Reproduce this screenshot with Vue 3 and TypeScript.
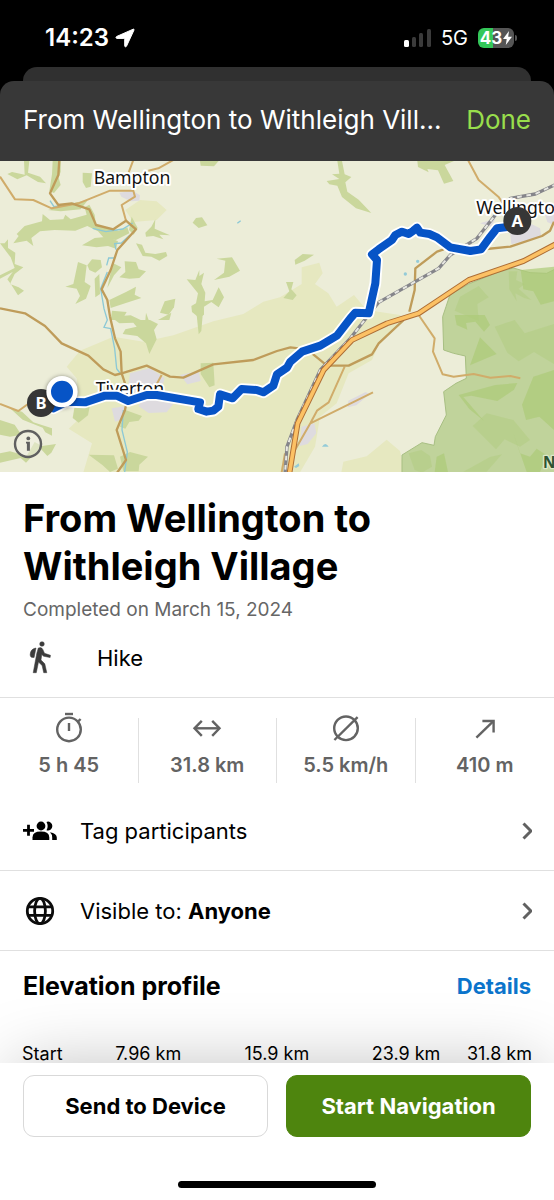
<script setup lang="ts">
interface Stat {
  id: string
  label: string
  value: string
  paths: string[]
  circle?: { cx: number; cy: number; r: number }
}

const title = 'From Wellington to Withleigh Village'
const shortTitle = 'From Wellington to Withleigh Vill...'

const stats: Stat[] = [
  {
    id: 'duration',
    label: 'Duration',
    value: '5 h 45',
    circle: { cx: 16, cy: 17.4, r: 11.8 },
    paths: ['M12 2h8', 'M16 11v8', 'M25 9.6l2.6-2.6'],
  },
  {
    id: 'distance',
    label: 'Distance',
    value: '31.8 km',
    paths: ['M10.8 8.8L3.5 16.3l7.3 7.5', 'M21.2 8.8l7.3 7.5-7.3 7.5', 'M4 16.3h24'],
  },
  {
    id: 'speed',
    label: 'Average speed',
    value: '5.5 km/h',
    circle: { cx: 16, cy: 16.3, r: 11.8 },
    paths: ['M4.4 28L27.6 5.2'],
  },
  {
    id: 'ascent',
    label: 'Ascent',
    value: '410 m',
    paths: ['M7.4 25.6L24.4 9.2', 'M13.4 9H24.6V20.4'],
  },
]

const ticks: string[] = ['Start', '7.96 km', '15.9 km', '23.9 km', '31.8 km']

const woods: string[] = [
  'M72 3h16l-4 35 36 12 18 20-24-4-34-20-28 12-30-16 14-6 38 8z',
  'M158 3h24v32l-6 18 6 22-20 24-14-6 8-50z',
  'M248 38l28 2-4 40-14 4-10-18z',
  'M600 3h56l-14 16-40-2z',
  'M144 150l90-24 28-4-20 26-60 6z',
  'M50 222l24-24 52-14 2-22 22 18 40-2 6-14 16 14 48-14-6-22 14-8 16 30 4 30 34 8 34 10 26-10 6 18-40 20-34-4-20-22-32-16-36 14-62-2-44 4-26 20 6 24-20-16-40 8 16-22z',
  'M395 170l18 34-12 20-14-14z',
  'M246 256l38-22 40-4 30 14-6 22-24-8-34 4z',
  'M408 250l18 4 10 24 30 4 32-6 4 12-24 14-24-12-26-2z',
  'M436 218l18-18 12-22-2 28 46 20-32-2 12 14-30-10-22 2z',
  'M578 188l10-14 18-2 16 24-26 8z',
  'M0 250l14 0 10-12 0 26 22 14-2 34 26 10-26 20-14 30 26 10 16 10-18 14-20-32-12-16 16-22-38 20v-10l44-22-12-32z',
  'M234 306l26 10-6 50 18 12-14 38-32 16 14-24-10-22-34-6 24-8z',
  'M262 316l14-18 26 2 4 22-20 16-18-8z',
  'M340 310l24 12-22 24-20 38 8-38z',
  'M374 304l34 2 8 22 22 6-20 20-30 2-30-4 18-16z',
  'M284 356l14-14 2 60-14 10z',
  'M328 420l50-24 30-16-4 24 20 10-44 14-48 16z',
  'M336 452l44 4-14 24h-34z',
  'M480 458l14-34 32-8-4 26-16 22z',
  'M438 458l8 22h-10zM474 480l40-22-6 22z',
  'M560 358l26 2 12-30 0 18 14-10-8 34 12 26-2 26 24-4 18-38 16 30-16 30-22-16-22 14 0 24-14 10-22-18-2-18 14-8 6-30z',
  'M650 296l46-4 24 40-32 18-46 10 30-22 4-36z',
  'M1012 3h14l8 40 20 8-18 16 6 28 34 24 38 40-46-14-42-34-14-34-24-4-8-10 38-6-22-14 22-2z',
  'M1252 3h110l-28 12 26 48-28 8-18-40-32-4 4 10-32-16z',
  'M1350 3h-80l20 20z',
  'M884 300l24-18 34 2-28 18-28 12z',
  'M858 366l22 0-6 22 16 18-12 14-28-6 18-20z',
  'M332 470l60-4 30 14 28 0 24 12-12 18 8 28-22 44-10-32-26-22-44-6 8-14 34-8-10-12-42 2z',
  'M590 465h18l-4 48-8 10z',
  'M602 610l38-2 4 68-16 6-26-40z',
  'M376 750l50 18-10 14-28 4-12 20-16-6z',
  'M224 738l46-4-6 32-28 22-18-14z',
  'M30 745l36 10 34 32 56 18 0 22-20-10-8-14-60-24z',
  'M0 780l44 14 20 30-34 6-30-6zM0 880l30-6 50 14 24-42 22 12 42-6-14 26-12 10-22-24-42 44-16-14-62 14z',
  'M360 890l30-14 54 14-26 24-2 20h-46z',
  'M266 884l76 2 12 40-24 10-22-20z',
]

const moor: string[] = [
  'M1364 465h90l16 30-18 20-26-30-28 4 4 20-32-14z',
  'M1526 334l26 0-4 26 26 12-18 14 38 34-22-6-26-14 4 24-22-36z',
  'M1376 705l110-30 66-6-10 20-50 34-78-16-24 4 62 72-44-36z',
  'M1380 410l56-32 30 34-34 20 4 50-72-30z',
  'M1562 330l100-10v104l-40 10-22-40-30-6z',
  'M1484 500l60-20 30 40 88-28v120l-60-36-46 28-34-26z',
  'M1440 532l50 50-34 14-46 20z',
  'M1460 760l80 20 50 60-30 20-46-22-26 30-70-70z',
  'M1600 650l62-20v180l-44-40-40 10-12-46z',
  'M1226 880l38-10 26 18 6 32-30 18-22-8z',
  'M1310 890l22-10 12 56h-40z',
  'M1390 935l80-44 36-8-46 52z',
  'M1540 820l20 60 30 10 20-24 30 20-20 50h-40z',
]

const minorRoads: string[] = [
  'M0 50L45 118 100 120 155 145 235 130 330 92H400L405 110 365 135 378 182',
  'M400 0L385 40M520 0L475 25 445 32',
  'M0 732L55 753 84 732',
  'M485 645L455 700',
  'M1404 0L1436 60 1495 110 1530 160',
  'M1256 465L1304 535 1299 575 1328 643 1361 650 1421 642 1471 653 1531 648 1561 655',
  'M1034 620L986 727 951 752 931 790 885 870M1119 697L931 790',
  'M855 880L845 937',
]

const mainRoads: string[] = [
  'M178 0L175 45 150 100 175 135 215 130 268 148 288 195 340 208 378 182 408 208 352 270 332 330 305 388 322 420 330 470 345 535 362 575 365 640 385 700 375 750 350 810 378 900 350 940',
  'M0 445L75 460 135 498 185 550 265 587 310 628 345 645 365 640 440 617 510 650 550 653 640 613 760 600 831 573 871 562 896 565',
  'M1460 267L1531 260 1626 228 1650 212 1662 185',
  'M1331 268L1311 275 1246 325 1244 390 1228 455',
  'M1211 480L1136 550 1116 583 1046 617H981L936 580',
]

const motorway = 'M1670 251L1571 303 1406 360 1256 460 1161 490 1056 540 971 630 893 790 868 942'
const railway = 'M1670 72L1606 102 1531 115 1486 165 1431 235 1351 285 1316 325 1136 427 1051 535 961 630 891 780 861 860 855 942'
const route =
  'M1531 200L1491 205 1471 230 1443 268 1411 273 1351 262 1311 232 1288 222 1261 218 1251 203 1240 212 1226 222 1206 215 1186 225 1176 240 1136 268 1116 283 1131 300 1126 370 1106 460 1066 458 1052 474 1011 527 961 557 906 575 871 605 861 623 831 643 820 677 790 697 770 690 725 687 698 715 660 703 655 740 640 752 620 755 595 747 600 727 470 705 440 705 385 723 350 707 315 707 255 727 200 725 160 745'
</script>

<template>
  <div class="screen">
    <div class="status">
      <div class="clock">
        <span>14:23</span>
        <svg class="locate" viewBox="0 0 20 20" aria-hidden="true">
          <path d="M18.200 1.200c.6-.3 1 .2.8.8l-7.500 16.200c-.5 1-1.800.7-1.800-.3V11.200c0-.6-.2-.8-.8-.8H2C.9 10.400.6 9 1.600 8.500z" fill="#fff" stroke="#fff" stroke-width="1" stroke-linejoin="round" />
        </svg>
      </div>
      <div class="signals">
        <svg class="bars" viewBox="0 0 28 18" aria-hidden="true">
          <rect x="0" y="11" width="5" height="7" rx="1.500" fill="#fff" />
          <rect x="8" y="8" width="4" height="10" rx="1.500" fill="#3b3b3b" />
          <rect x="15" y="4" width="4" height="14" rx="1.500" fill="#3b3b3b" />
          <rect x="23" y="0" width="4" height="18" rx="1.500" fill="#3b3b3b" />
        </svg>
        <span class="network">5G</span>
        <span class="battery">
          <span class="cell">
            <span>43</span>
            <svg class="bolt" viewBox="0 0 9 14" aria-hidden="true"><path d="M6 0L0 8h3.700L2.800 14 9 5.700H5.200z" fill="#fff" /></svg>
          </span>
          <span class="nub"></span>
        </span>
      </div>
    </div>

    <div class="behind"></div>

    <header class="bar">
      <span class="bar-title">{{ shortTitle }}</span>
      <button type="button" class="done">Done</button>
    </header>

    <main class="sheet">
      <section class="map" aria-label="Route map">
        <svg class="map-art" viewBox="0 3 1662 933" preserveAspectRatio="xMidYMid slice" role="img" aria-label="Map from Wellington to Withleigh">
          <rect x="-1000" y="-1000" width="4000" height="3000" fill="#ecedd8" />
          <path fill="#e6e8c0" d="M640 484L730 462 790 425 840 412 905 372 905 322 958 308 968 340 945 372 985 400 1010 440 1062 405 1100 450 1200 465 1211 485 1136 555 1116 600 1046 640 1010 730 960 770 945 860 900 937H250L276 850 206 806 244 770 230 655 200 620 240 572 340 530 430 545 520 526z" />
          <path fill="#e6e8c0" d="M376 150l44-30 50 4 30 26-30 30-70 6zM1030 905l70-16 60-50 40 34 14 64h-190z" />
          <path fill="#dedbdf" d="M358 98l40-6 22 14-2 16-26 2-28-14zM390 640l60-16 44 30-10 40-50 20-50-30zM540 645l56-12 6 30-40 10zM430 715l90 16-20 26-54 2-30-20zM335 745l40-6-10 40-20 6zM1530 215l50-30 40 20 4 26-90 22zM1630 150l32-14v60l-20-10zM1440 190l46-14-12 24zM1045 722l52-26 12 6-40 34-26 6zM905 800l38-10 6 30-26 32-24 6z" />
          <path v-for="(d, i) in woods" :key="`w${i}`" :d="d" fill="#cad79c" />
          <path fill="#c0d39b" stroke="#a8bf83" stroke-width="3" d="M1700 310L1640 340 1590 338 1540 324 1490 338 1406 372 1350 404 1338 440 1328 470 1331 570 1361 580 1396 588 1399 655 1368 670 1331 695 1339 765 1306 830 1302 856 1266 848 1206 885V945H1700z" />
          <path v-for="(d, i) in moor" :key="`m${i}`" :d="d" fill="#adca77" :fill-opacity="i % 2 ? 0.4 : 0.7" />
          <path fill="none" stroke="#8cc9d6" stroke-width="4" d="M150 122l12 18 60-10M278 205l40 10 50-8 30-18M390 225l-26 24-20 2 4 18M344 294l-18 0-6 22M322 336l-20 50 10 60 10 34-10 22 20 4 12 60 6 60 12 16M370 750l-4 60 16 66-8 60M712 190l10-8" />
          <path fill="#94cbd8" d="M1211 342a5 5 0 1 0 10 0 5 5 0 1 0-10 0M1248 304a5 5 0 1 0 10 0 5 5 0 1 0-10 0M966 860q10-16 20 0zM882 920l14-10 2 8-10 6z" />
          <g fill="none" stroke-linejoin="round">
            <path v-for="(d, i) in minorRoads" :key="`n${i}`" :d="d" stroke="#d0ac6a" stroke-width="6" />
            <path v-for="(d, i) in mainRoads" :key="`r${i}`" :d="d" stroke="#bf9c5a" stroke-width="7" />
            <path :d="railway" stroke="#85858a" stroke-width="10" />
            <path :d="railway" stroke="#e8e8e2" stroke-width="6" stroke-dasharray="14 14" />
            <path :d="motorway" stroke="#ad6d35" stroke-width="17" />
            <path :d="motorway" stroke="#fcc164" stroke-width="11" />
          </g>
          <g class="place">
            <text x="281" y="72">Bampton</text>
            <text x="1429" y="161">Wellington</text>
            <text x="287" y="704">Tiverton</text>
            <text class="park" x="1629" y="924">N</text>
          </g>
          <g fill="none" stroke-linejoin="round" stroke-linecap="round">
            <path :d="route" stroke="#fff" stroke-width="35" />
            <path :d="route" stroke="#0754c6" stroke-width="24" />
          </g>
          <g class="pin">
            <circle cx="123" cy="729" r="42" />
            <text x="123" y="747">B</text>
            <circle cx="1552" cy="183" r="42" />
            <text x="1552" y="201">A</text>
          </g>
          <circle class="here" cx="186" cy="695" r="40" fill="#0754c6" stroke="#fff" stroke-width="14" />
        </svg>
        <button type="button" class="info" aria-label="Map information">
          <svg viewBox="0 0 30 30" aria-hidden="true">
            <circle cx="15" cy="15" r="13" fill="#f2f2e6" fill-opacity=".5" stroke="#606060" stroke-width="2.400" />
            <circle cx="15.300" cy="9.400" r="1.900" fill="#606060" />
            <path d="M13 12.800h3.900v9h-3v-7.200H13z" fill="#606060" />
          </svg>
        </button>
      </section>

      <section class="intro">
        <h1>{{ title }}</h1>
        <p class="date">Completed on March 15, 2024</p>
        <div class="sport">
          <svg class="hiker" viewBox="3 0 40 40" aria-hidden="true">
            <g fill="#3c3c3c" stroke="#3c3c3c" stroke-width=".5" stroke-linejoin="round">
              <circle cx="22" cy="6" r="2.300" />
              <path d="M16 10c-3.500.3-5.800 3-5.800 6.500 0 2 .8 3 2.300 3h1.600z" />
              <path d="M18.300 10q3.600-1.200 4.500 1.400l1.700 3.900 6 2-.4 2.300-6.500-1.400-1.800-1.600-.8 5.400 3.800 3.800 2 8.900h-3.100l-1.600-7.200-3.600-3.400-2.200 10.600h-3.100l3.600-19.500z" />
            </g>
          </svg>
          <span>Hike</span>
        </div>
      </section>

      <dl class="stats">
        <div v-for="s in stats" :key="s.id" class="stat">
          <dt :aria-label="s.label">
            <svg viewBox="0 0 32 32" fill="none" stroke="#636363" stroke-width="2.400" aria-hidden="true">
              <circle v-if="s.circle" :cx="s.circle.cx" :cy="s.circle.cy" :r="s.circle.r" />
              <path v-for="(p, i) in s.paths" :key="i" :d="p" />
            </svg>
          </dt>
          <dd>{{ s.value }}</dd>
        </div>
      </dl>

      <button type="button" class="row">
        <svg class="row-icon" viewBox="1 1 34 34" aria-hidden="true">
          <path d="M1 17.300h11M6.500 11.800v11" stroke="#000" stroke-width="2.800" />
          <circle cx="19" cy="13" r="4.400" />
          <path d="M10.500 27v-2.600q0-5.800 8.400-5.800t8.400 5.800V27z" />
          <path d="M24.500 8.900a4.400 4.400 0 1 1 0 8.300q2.400-4.100 0-8.300z" />
          <path d="M28 19.200q6.800 1.300 6.800 5.200V27h-4.600v-2.600q0-3.100-2.200-5.200z" />
        </svg>
        <span class="row-text">Tag participants</span>
        <svg class="chevron" viewBox="0 0 10 18" aria-hidden="true"><path d="M1.500 1.500L9 9l-7.500 7.500" /></svg>
      </button>
      <button type="button" class="row">
        <svg class="row-icon" viewBox="1 1 34 34" aria-hidden="true">
          <g fill="none" stroke="#0c0c0c" stroke-width="2.800">
            <circle cx="18" cy="18" r="12.700" />
            <ellipse cx="18" cy="18" rx="5.400" ry="12.700" />
            <path d="M6 13.800h24M6 22.400h24" />
          </g>
        </svg>
        <span class="row-text">Visible to: <strong>Anyone</strong></span>
        <svg class="chevron" viewBox="0 0 10 18" aria-hidden="true"><path d="M1.500 1.500L9 9l-7.500 7.500" /></svg>
      </button>

      <section class="elevation">
        <div class="elevation-head">
          <h2>Elevation profile</h2>
          <a href="#details">Details</a>
        </div>
        <div class="axis">
          <span v-for="t in ticks" :key="t">{{ t }}</span>
        </div>
      </section>
    </main>

    <footer class="actions">
      <div class="buttons">
        <button type="button" class="action">Send to Device</button>
        <button type="button" class="action primary">Start Navigation</button>
      </div>
      <div class="home"></div>
    </footer>
  </div>
</template>

<style>
body {
  margin: 0;
  background: #000;
}
</style>

<style scoped>
* {
  box-sizing: border-box;
}

.screen {
  display: flex;
  flex-direction: column;
  min-height: 100vh;
  overflow: hidden;
  background: #000;
  color: #000;
  font-family: Inter, "Liberation Sans", sans-serif;
}

button {
  margin: 0;
  padding: 0;
  border: 0;
  background: none;
  color: inherit;
  font: inherit;
  cursor: pointer;
}

svg {
  display: block;
  flex: none;
}

.status {
  display: flex;
  justify-content: space-between;
  align-items: center;
  height: 67px;
  padding: 8px 37px 0 45px;
  color: #fff;
}

.clock {
  display: flex;
  align-items: center;
  gap: 6px;
  font-size: 24px;
  font-weight: 600;
}

.locate {
  width: 20px;
  height: 20px;
}

.signals {
  display: flex;
  align-items: center;
}

.bars {
  width: 28px;
  height: 18px;
}

.network {
  margin-left: 9px;
  font-size: 20px;
}

.battery {
  display: flex;
  align-items: center;
  gap: 1px;
  margin-left: 10px;
}

.cell {
  display: flex;
  align-items: center;
  justify-content: center;
  gap: 1px;
  width: 36px;
  height: 20px;
  border-radius: 6px;
  background: linear-gradient(90deg, #34c759 43%, #555 43%);
  font-size: 17px;
  font-weight: 700;
}

.bolt {
  width: 9px;
  height: 14px;
}

.nub {
  width: 2px;
  height: 6px;
  border-radius: 0 2px 2px 0;
  background: #555;
}

.behind {
  height: 14px;
  margin: 0 23px;
  border-radius: 14px 14px 0 0;
  background: #303030;
}

.bar {
  display: flex;
  align-items: center;
  justify-content: space-between;
  gap: 20px;
  height: 80px;
  padding: 0 23px 4px;
  border-radius: 14px 14px 0 0;
  background: #383838;
  color: #fff;
  font-size: 26px;
}

.bar-title {
  overflow: hidden;
  white-space: nowrap;
}

.done {
  color: #98de4c;
}

.sheet {
  flex: 1;
  background: #fff;
}

.map {
  position: relative;
  height: 311px;
}

.map-art {
  width: 100%;
  height: 100%;
}

.place {
  fill: #111;
  stroke: #fff;
  stroke-width: 12px;
  stroke-linejoin: round;
  paint-order: stroke;
  font-family: "Noto Sans", sans-serif;
  font-size: 53px;
}

.place .park {
  fill: #2d5230;
  stroke: #dce8c8;
  stroke-width: 8px;
  font-size: 46px;
  font-weight: 700;
}

.pin {
  fill: #363636;
}

.pin text {
  fill: #fff;
  font-family: "Noto Sans", sans-serif;
  font-size: 50px;
  font-weight: 700;
  text-anchor: middle;
}

.here {
  filter: drop-shadow(0 2px 6px rgba(0, 0, 0, 0.5));
}

.info {
  position: absolute;
  left: 13px;
  bottom: 13px;
  width: 30px;
  height: 30px;
}

.intro {
  padding: 22px 23px 19px;
}

h1 {
  max-width: 420px;
  margin: 0;
  font-size: 38px;
  font-weight: 700;
  line-height: 48px;
}

.date {
  margin: 8px 0 0;
  color: #666;
  font-size: 19px;
  line-height: 24px;
}

.sport {
  display: flex;
  align-items: center;
  gap: 34px;
  margin-top: 16px;
  font-size: 22px;
}

.hiker {
  width: 40px;
  height: 40px;
}

.stats {
  display: grid;
  grid-template-columns: repeat(4, 1fr);
  margin: 0;
  padding: 20px 0 8px;
  border-top: 1px solid #e0e0e0;
}

.stat {
  display: flex;
  flex-direction: column;
  align-items: center;
  height: 65px;
  color: #636363;
}

.stat:not(:last-child) {
  border-right: 1px solid #e0e0e0;
}

.stat svg {
  width: 32px;
  height: 32px;
  margin-top: -6px;
  overflow: visible;
}

dd {
  margin: 9px 0 0;
  font-size: 20px;
  font-weight: 600;
  line-height: 24px;
}

.row {
  display: flex;
  align-items: center;
  gap: 23px;
  width: 100%;
  height: 80px;
  padding: 0 22px 0 23px;
  border-bottom: 1px solid #e0e0e0;
  font-size: 22px;
  text-align: left;
}

.row-icon {
  width: 34px;
  height: 34px;
}

.row-text {
  flex: 1;
}

.row-text strong {
  font-weight: 700;
}

.chevron {
  width: 10px;
  height: 18px;
  fill: none;
  stroke: #616161;
  stroke-width: 3px;
}

.elevation-head {
  display: flex;
  align-items: center;
  justify-content: space-between;
  padding: 20px 23px 0;
}

h2 {
  margin: 0;
  font-size: 25px;
  font-weight: 700;
  line-height: 30px;
}

a {
  color: #0b74cb;
  font-size: 22px;
  font-weight: 700;
  text-decoration: none;
}

.axis {
  display: grid;
  grid-template-columns: 93fr 129fr 127fr 95fr auto;
  margin-top: 44px;
  padding: 0 22px;
  font-size: 18px;
  line-height: 18px;
}

.actions {
  position: relative;
  display: flex;
  flex-direction: column;
  align-items: center;
  height: 137px;
  background: #fff;
  box-shadow: 0 -10px 70px -14px rgba(0, 0, 0, 0.26);
}

.buttons {
  display: grid;
  grid-template-columns: 1fr 1fr;
  gap: 18px;
  width: 100%;
  padding: 12px 23px 0;
}

.action {
  height: 62px;
  border: 1px solid #d9d9d9;
  border-radius: 11px;
  background: #fff;
  font-size: 22px;
  font-weight: 700;
}

.action.primary {
  border-color: #4e850e;
  background: #4e850e;
  color: #fff;
}

.home {
  width: 198px;
  height: 7px;
  margin-top: 44px;
  border-radius: 4px;
  background: #000;
}
</style>
